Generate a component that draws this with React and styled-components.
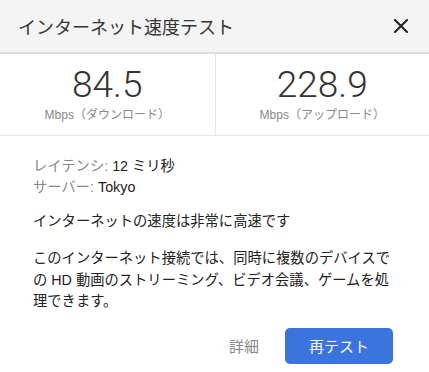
import React from 'react'
import styled, { createGlobalStyle } from 'styled-components'

const Global = createGlobalStyle`
  html, body { margin: 0; padding: 0; background: #fff; }
  body { font-family: "Liberation Sans", "Noto Sans CJK JP", sans-serif; color: #222; }
`

const Dialog = styled.div`
  width: 429px;
  height: 372px;
  display: flex;
  flex-direction: column;
  overflow: hidden;
`

const Header = styled.div`
  height: 52px;
  background: #f4f4f4;
  border-bottom: 2px solid #dedede;
  display: flex;
  align-items: center;
  justify-content: space-between;
  padding: 0 18px;
  flex-shrink: 0;
`

const Title = styled.h1`
  margin: 0;
  font-size: 18px;
  font-weight: 400;
  color: #333;
`

const CloseButton = styled.button`
  border: 0;
  background: none;
  padding: 0;
  width: 20px;
  height: 20px;
  display: flex;
  align-items: center;
  justify-content: center;
  cursor: pointer;
`

const Metrics = styled.div`
  display: grid;
  grid-template-columns: 1fr 1fr;
  height: 81px;
  border-bottom: 1px solid #e6e6e6;
  flex-shrink: 0;
`

const Metric = styled.div`
  display: flex;
  flex-direction: column;
  align-items: center;
  padding-top: 9px;
  border-left: ${p => (p.$divider ? '1px solid #e6e6e6' : 'none')};
`

const Value = styled.div`
  font-family: Roboto, "Liberation Sans", sans-serif;
  font-weight: 300;
  font-size: 37px;
  line-height: 44px;
  color: #333;
`

const Unit = styled.div`
  font-size: 12px;
  line-height: 17px;
  color: #888;
`

const Body = styled.div`
  padding: 20px 36px 0 33px;
  font-size: 14.3px;
  line-height: 21px;
`

const InfoRow = styled.div`
  color: #222;
`

const Label = styled.span`
  color: #888;
`

const Summary = styled.p`
  margin: 13px 0 0;
`

const Detail = styled.p`
  margin: 16px 0 0;
  line-height: 21.5px;
`

const Actions = styled.div`
  display: flex;
  justify-content: flex-end;
  align-items: center;
  gap: 26px;
  padding: 15px 36px 0 0;
`

const LinkButton = styled.button`
  border: 0;
  background: none;
  font: inherit;
  font-size: 15px;
  color: #888;
  padding: 0;
`

const PrimaryButton = styled.button`
  width: 108px;
  height: 36px;
  border: 0;
  border-radius: 5px;
  background: #3a74dc;
  color: #fff;
  font: inherit;
  font-size: 15px;
`

export default function App() {
  return (
    <Dialog>
      <Global />
      <Header>
        <Title>インターネット速度テスト</Title>
        <CloseButton aria-label="閉じる">
          <svg width="14" height="14" viewBox="0 0 14 14">
            <path d="M1 1 L13 13 M13 1 L1 13" stroke="#222" strokeWidth="2" strokeLinecap="square" />
          </svg>
        </CloseButton>
      </Header>
      <Metrics>
        <Metric>
          <Value>84.5</Value>
          <Unit>Mbps（ダウンロード）</Unit>
        </Metric>
        <Metric $divider>
          <Value>228.9</Value>
          <Unit>Mbps（アップロード）</Unit>
        </Metric>
      </Metrics>
      <Body>
        <InfoRow><Label>レイテンシ:</Label> 12 ミリ秒</InfoRow>
        <InfoRow><Label>サーバー:</Label> Tokyo</InfoRow>
        <Summary>インターネットの速度は非常に高速です</Summary>
        <Detail>このインターネット接続では、同時に複数のデバイスでの HD 動画のストリーミング、ビデオ会議、ゲームを処理できます。</Detail>
      </Body>
      <Actions>
        <LinkButton>詳細</LinkButton>
        <PrimaryButton>再テスト</PrimaryButton>
      </Actions>
    </Dialog>
  )
}
